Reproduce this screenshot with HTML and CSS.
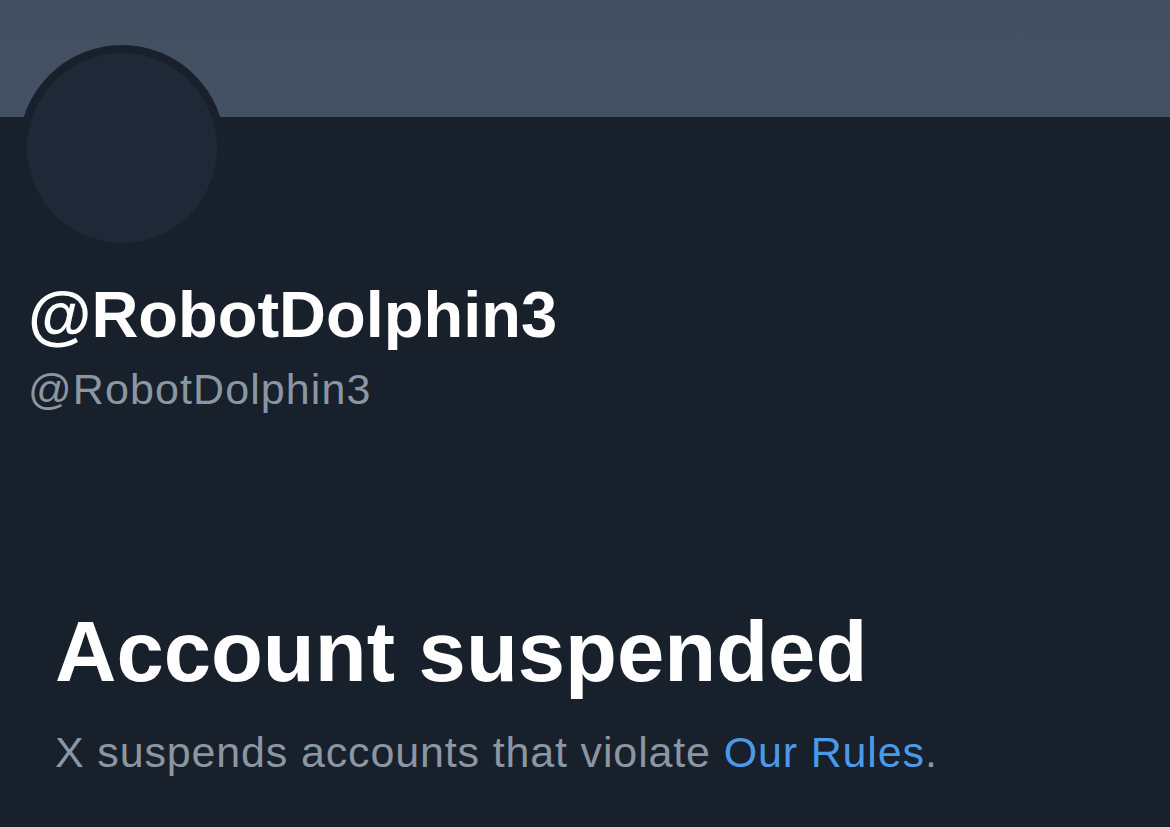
FILE: index.html
```html
<!DOCTYPE html>
<html lang="en">
<head>
<meta charset="utf-8">
<title>@RobotDolphin3</title>
<link rel="stylesheet" href="styles.css">
</head>
<body>
<div class="page">
  <div class="banner"></div>
  <div class="profile">
    <div class="avatar"><div class="avatar-inner"></div></div>
    <div class="names">
      <div class="display-name">@RobotDolphin3</div>
      <div class="handle">@RobotDolphin3</div>
    </div>
  </div>
  <div class="suspended">
    <h1 class="title">Account suspended</h1>
    <p class="desc">X suspends accounts that violate <a class="link" href="#">Our Rules</a>.</p>
  </div>
</div>
</body>
</html>
```

FILE: styles.css
```css
html, body {
  margin: 0;
  padding: 0;
  background: #18202b;
}
body {
  font-family: "Liberation Sans", Arial, sans-serif;
  color: #ffffff;
  width: 1170px;
  height: 827px;
  overflow: hidden;
}
.page {
  display: flex;
  flex-direction: column;
}
.banner {
  height: 117px;
  background: linear-gradient(180deg, #435062 0%, #445164 100%);
}
.profile {
  display: flex;
  flex-direction: column;
  padding-left: 19px;
}
.avatar {
  width: 206px;
  height: 206px;
  margin-top: -72px;
  border-radius: 50%;
  background: #18202b;
  display: flex;
  align-items: center;
  justify-content: center;
}
.avatar-inner {
  width: 190px;
  height: 190px;
  border-radius: 50%;
  background: #1f2836;
}
.names {
  padding-left: 9px;
  margin-top: 25px;
  display: flex;
  flex-direction: column;
  gap: 10px;
}
.display-name {
  font-size: 65px;
  font-weight: 700;
  line-height: 1.2;
  letter-spacing: 0;
  color: #ffffff;
}
.handle {
  font-size: 43px;
  line-height: 1.2;
  color: #8b96a3;
  letter-spacing: 1.1px;
}
.suspended {
  padding-left: 55px;
  margin-top: 185px;
}
.title {
  margin: 0;
  font-size: 85px;
  font-weight: 700;
  line-height: 1.2;
  color: #ffffff;
  letter-spacing: 0;
}
.desc {
  margin: 24px 0 0 0;
  font-size: 43px;
  line-height: 1.2;
  color: #8b96a3;
  letter-spacing: 0.85px;
}
.link {
  color: #4a9ae9;
  text-decoration: none;
}
```
